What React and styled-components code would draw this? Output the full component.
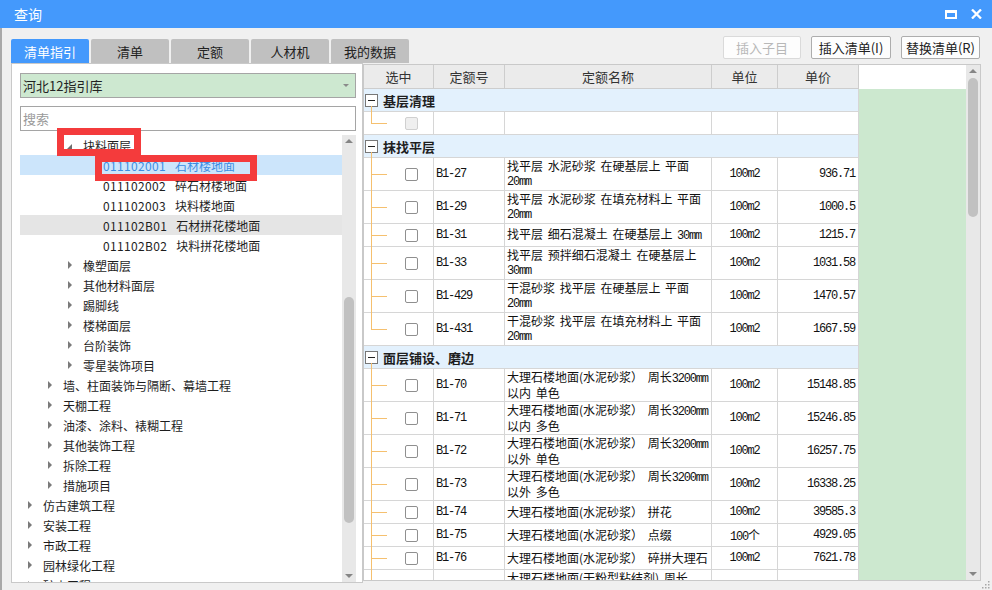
import React from 'react';
import styled, { createGlobalStyle } from 'styled-components';

const CJK = `"Noto Sans CJK SC", "Noto Sans", sans-serif`;
const MONO = `"Liberation Mono", "DejaVu Sans Mono", "Noto Sans CJK SC", monospace`;
const LINE = '#f5c06f';
const GRID = '70px 71px 207px 66px 81px 1fr';

const Global = createGlobalStyle`
  html, body { margin: 0; padding: 0; background: #f0f0f0; }
  body { font-family: ${CJK}; }
  #root { width: 992px; height: 590px; overflow: hidden; }
  * { box-sizing: border-box; }
`;

const Window = styled.div`
  position: relative;
  width: 992px;
  height: 590px;
  background: #f0f0f0;
  display: flex;
  flex-direction: column;
  overflow: hidden;
`;

const TitleBar = styled.div`
  height: 28px;
  flex-shrink: 0;
  background: #4499fc;
  color: #fff;
  font-size: 14px;
  display: flex;
  align-items: center;
  padding: 0 10px 0 14px;
`;

const WinControls = styled.div`
  margin-left: auto;
  display: flex;
  align-items: center;
  gap: 14px;
`;

const Body = styled.div`
  flex: 1;
  min-height: 0;
  display: flex;
  flex-direction: column;
  border-left: 2px solid #a9a9a9;
`;

const Toolbar = styled.div`
  height: 35px;
  flex-shrink: 0;
  display: flex;
  align-items: flex-end;
  padding: 0 12px 0 9px;
`;

const Tabs = styled.div`
  display: flex;
  gap: 2px;
`;

const Tab = styled.div`
  width: 78px;
  height: 24px;
  border-radius: 2px 2px 0 0;
  background: ${p => (p.active ? '#4499fc' : '#c0c0c0')};
  color: ${p => (p.active ? '#fff' : '#222')};
  font-size: 13px;
  display: flex;
  align-items: center;
  justify-content: center;
`;

const Actions = styled.div`
  margin-left: auto;
  margin-bottom: 4px;
  display: flex;
  gap: 10px;
`;

const ActionButton = styled.div`
  width: ${p => p.w}px;
  height: 23px;
  border: 1px solid ${p => (p.disabled ? '#dadada' : '#adadad')};
  border-radius: 2px;
  background: #fdfdfd;
  color: ${p => (p.disabled ? '#b8b8b8' : '#222')};
  font-size: 13px;
  display: flex;
  align-items: center;
  justify-content: center;
`;

const Main = styled.div`
  flex: 1;
  display: flex;
  align-items: flex-start;
  padding: 0 11px 0 9px;
`;

const LeftPanel = styled.div`
  width: 352px;
  height: 520px;
  flex-shrink: 0;
  background: #fff;
  border: 1px solid #c9c9c9;
  padding: 9px 6px 0 8px;
  display: flex;
  flex-direction: column;
`;

const SelectBox = styled.div`
  height: 25px;
  flex-shrink: 0;
  background: #cde8d0;
  border: 1px solid #a5a5a5;
  display: flex;
  align-items: center;
  padding: 0 6px 0 2px;
  font-size: 13px;
  color: #222;
`;

const SelectArrow = styled.span`
  margin-left: auto;
  width: 0;
  height: 0;
  border-left: 3px solid transparent;
  border-right: 3px solid transparent;
  border-top: 3px solid #8a8a8a;
`;

const SearchBox = styled.div`
  height: 25px;
  flex-shrink: 0;
  margin-top: 8px;
  border: 1px solid #a5a5a5;
  display: flex;
  align-items: center;
  padding-left: 2px;
  font-size: 13px;
  color: #9a9a9a;
`;

const TreeArea = styled.div`
  flex: 1;
  min-height: 0;
  margin-top: 4px;
  display: flex;
`;

const TreeList = styled.div`
  flex: 1;
  overflow: hidden;
`;

const TreeRow = styled.div`
  height: 20px;
  display: flex;
  align-items: center;
  padding-left: ${p => 8 + (p.level - 1) * 20}px;
  background: ${p => (p.selected ? '#cce5fb' : p.hover ? '#e5e5e5' : 'transparent')};
  color: ${p => (p.selected ? '#3d8de2' : '#1e1e1e')};
  font-size: 12px;
  white-space: nowrap;
`;

const TreeCode = styled.span`
  letter-spacing: 0.35px;
  margin-right: 9px;
`;

const Toggle = styled.span`
  width: 15px;
  height: 20px;
  flex-shrink: 0;
  display: flex;
  align-items: center;
`;

const Collapsed = styled.span`
  width: 0;
  height: 0;
  border-top: 4px solid transparent;
  border-bottom: 4px solid transparent;
  border-left: 4px solid #7a7a7a;
`;

const Expanded = styled.span`
  width: 0;
  height: 0;
  margin-left: -2px;
  margin-top: 3px;
  border-left: 6px solid transparent;
  border-bottom: 6px solid #6e6e6e;
`;

const ScrollBar = styled.div`
  width: 14px;
  flex-shrink: 0;
  background: #e8e8e8;
  display: flex;
  flex-direction: column;
  align-items: center;
`;

const ScrollArrow = styled.div`
  height: 12px;
  width: 100%;
  flex-shrink: 0;
  display: flex;
  align-items: center;
  justify-content: center;
`;

const ArrowUp = styled.span`
  width: 0;
  height: 0;
  border-left: 4px solid transparent;
  border-right: 4px solid transparent;
  border-bottom: 4px solid #858585;
`;

const ArrowDown = styled.span`
  width: 0;
  height: 0;
  border-left: 4px solid transparent;
  border-right: 4px solid transparent;
  border-top: 4px solid #858585;
`;

const ScrollTrack = styled.div`
  flex: 1;
  width: 100%;
  display: flex;
  flex-direction: column;
  align-items: center;
`;

const Thumb = styled.div`
  width: 10px;
  margin-top: ${p => p.top}px;
  height: ${p => p.h}px;
  border-radius: 5px;
  background: #c1c1c1;
`;

const RightPanel = styled.div`
  flex: 1;
  height: 517px;
  margin-top: 1px;
  border: 1px solid #c9c9c9;
  background: #f0f0f0;
  display: flex;
`;

const Table = styled.div`
  flex: 1;
  overflow: hidden;
  display: flex;
  flex-direction: column;
`;

const Row = styled.div`
  display: grid;
  grid-template-columns: ${GRID};
  height: ${p => p.h}px;
  flex-shrink: 0;
`;

const Cell = styled.div`
  position: relative;
  background: #fff;
  border-right: 1px solid #d6d6d6;
  border-bottom: 1px solid #d6d6d6;
  display: flex;
  align-items: center;
  justify-content: ${p => p.justify || 'flex-start'};
  padding: 0 ${p => p.pr || 0}px 0 ${p => p.pl || 0}px;
  font-family: ${p => (p.mono ? MONO : CJK)};
  font-size: 12px;
  letter-spacing: ${p => (p.mono ? '-1.2px' : '0')};
  color: #111;
  white-space: nowrap;
  min-width: 0;
`;

const HeadCell = styled.div`
  background: #ebebeb;
  border-right: 1px solid #cdcdcd;
  border-bottom: 1px solid #cdcdcd;
  display: flex;
  align-items: center;
  justify-content: center;
  font-size: 13px;
  color: #333;
`;

const Fill = styled.div`
  background: ${p => (p.head ? '#fff' : '#cce8cf')};
`;

const SelectCell = styled(Cell)`
  padding-left: 41px;
  &::before {
    content: '';
    position: absolute;
    left: 7px;
    top: 0;
    width: 1px;
    height: ${p => (p.last ? '50%' : 'calc(100% + 1px)')};
    background: ${LINE};
    z-index: 1;
  }
  &::after {
    content: '';
    position: absolute;
    left: 7px;
    top: 50%;
    width: 16px;
    height: 1px;
    background: ${LINE};
  }
`;

const GroupCell = styled.div`
  grid-column: 1 / 6;
  position: relative;
  background: #e3f1fd;
  border-right: 1px solid #d6d6d6;
  border-bottom: 1px solid #d6d6d6;
  display: flex;
  align-items: center;
  padding-left: 1px;
  font-size: 13px;
  font-weight: bold;
  color: #1e1e1e;
  &::after {
    content: '';
    position: absolute;
    left: 7px;
    top: calc(50% + 6px);
    bottom: -1px;
    width: 1px;
    background: ${LINE};
    z-index: 1;
  }
`;

const MinusBox = styled.span`
  width: 13px;
  height: 13px;
  border: 1px solid #777;
  background: #fff;
  display: flex;
  align-items: center;
  justify-content: center;
  margin-right: 5px;
  &::before {
    content: '';
    width: 7px;
    height: 1px;
    background: #222;
  }
`;

const CheckBox = styled.span`
  width: 13px;
  height: 13px;
  border: 1px solid ${p => (p.disabled ? '#d0d0d0' : '#8f8f8f')};
  background: ${p => (p.disabled ? '#efefef' : '#fff')};
  border-radius: 2px;
`;

const NameText = styled.div`
  line-height: 14px;
  word-spacing: 2px;
`;

const Ascii = styled.span`
  font-family: ${MONO};
  font-size: 12px;
  letter-spacing: -1.2px;
  word-spacing: 0;
`;

const RedBox = styled.div`
  position: absolute;
  left: ${p => p.x}px;
  top: ${p => p.y}px;
  width: ${p => p.w}px;
  height: ${p => p.h}px;
  border: 7px solid #f43b3c;
  pointer-events: none;
`;

const Grip = styled.svg`
  position: absolute;
  right: 2px;
  bottom: 1px;
`;

const tree = [
  { level: 3, text: '块料面层', expanded: true },
  { level: 4, code: '011102001', text: '石材楼地面', selected: true },
  { level: 4, code: '011102002', text: '碎石材楼地面' },
  { level: 4, code: '011102003', text: '块料楼地面' },
  { level: 4, code: '011102B01', text: '石材拼花楼地面', hover: true },
  { level: 4, code: '011102B02', text: '块料拼花楼地面' },
  { level: 3, text: '橡塑面层' },
  { level: 3, text: '其他材料面层' },
  { level: 3, text: '踢脚线' },
  { level: 3, text: '楼梯面层' },
  { level: 3, text: '台阶装饰' },
  { level: 3, text: '零星装饰项目' },
  { level: 2, text: '墙、柱面装饰与隔断、幕墙工程' },
  { level: 2, text: '天棚工程' },
  { level: 2, text: '油漆、涂料、裱糊工程' },
  { level: 2, text: '其他装饰工程' },
  { level: 2, text: '拆除工程' },
  { level: 2, text: '措施项目' },
  { level: 1, text: '仿古建筑工程' },
  { level: 1, text: '安装工程' },
  { level: 1, text: '市政工程' },
  { level: 1, text: '园林绿化工程' },
  { level: 1, text: '矿山工程' },
];

const groups = [
  { title: '基层清理', rows: [{ empty: true }] },
  {
    title: '抹找平层',
    rows: [
      { code: 'B1-27', name: ['找平层 水泥砂浆 在硬基层上 平面', '20mm'], unit: '100m2', price: '936.71' },
      { code: 'B1-29', name: ['找平层 水泥砂浆 在填充材料上 平面', '20mm'], unit: '100m2', price: '1000.5' },
      { code: 'B1-31', name: ['找平层 细石混凝土 在硬基层上 30mm'], unit: '100m2', price: '1215.7' },
      { code: 'B1-33', name: ['找平层 预拌细石混凝土 在硬基层上', '30mm'], unit: '100m2', price: '1031.58' },
      { code: 'B1-429', name: ['干混砂浆 找平层 在硬基层上 平面', '20mm'], unit: '100m2', price: '1470.57' },
      { code: 'B1-431', name: ['干混砂浆 找平层 在填充材料上 平面', '20mm'], unit: '100m2', price: '1667.59' },
    ],
  },
  {
    title: '面层铺设、磨边',
    open: true,
    rows: [
      { code: 'B1-70', name: ['大理石楼地面(水泥砂浆） 周长3200mm', '以内 单色'], unit: '100m2', price: '15148.85' },
      { code: 'B1-71', name: ['大理石楼地面(水泥砂浆） 周长3200mm', '以内 多色'], unit: '100m2', price: '15246.85' },
      { code: 'B1-72', name: ['大理石楼地面(水泥砂浆） 周长3200mm', '以外 单色'], unit: '100m2', price: '16257.75' },
      { code: 'B1-73', name: ['大理石楼地面(水泥砂浆） 周长3200mm', '以外 多色'], unit: '100m2', price: '16338.25' },
      { code: 'B1-74', name: ['大理石楼地面(水泥砂浆） 拼花'], unit: '100m2', price: '39585.3' },
      { code: 'B1-75', name: ['大理石楼地面(水泥砂浆） 点缀'], unit: '100个', price: '4929.05' },
      { code: 'B1-76', name: ['大理石楼地面(水泥砂浆） 碎拼大理石'], unit: '100m2', price: '7621.78' },
      { code: 'B1-77', name: ['大理石楼地面(干粉型粘结剂) 周长', '3200mm以内 单色'], unit: '100m2', price: '15360.12' },
    ],
  },
];

function MixedLine({ text }) {
  const parts = text.split(/([A-Za-z0-9.]+)/);
  return (
    <div>
      {parts.map((p, i) =>
        /^[A-Za-z0-9.]+$/.test(p) ? <Ascii key={i}>{p}</Ascii> : <React.Fragment key={i}>{p}</React.Fragment>
      )}
    </div>
  );
}

function MaxIcon() {
  return (
    <svg width="12" height="9" viewBox="0 0 12 9">
      <rect x="1" y="1.5" width="10" height="6.5" fill="none" stroke="#fff" strokeWidth="2" />
      <rect x="0" y="0" width="12" height="3" fill="#fff" />
    </svg>
  );
}

function CloseIcon() {
  return (
    <svg width="11" height="10" viewBox="0 0 11 10">
      <path d="M1 0.5 L10 9.5 M10 0.5 L1 9.5" stroke="#fff" strokeWidth="2.3" />
    </svg>
  );
}

function Scroll({ top, h }) {
  return (
    <ScrollBar>
      <ScrollArrow><ArrowUp /></ScrollArrow>
      <ScrollTrack><Thumb top={top} h={h} /></ScrollTrack>
      <ScrollArrow><ArrowDown /></ScrollArrow>
    </ScrollBar>
  );
}

function DataRow({ r, last }) {
  if (r.empty) {
    return (
      <Row h={23}>
        <SelectCell last={last}><CheckBox disabled /></SelectCell>
        <Cell /><Cell /><Cell /><Cell />
        <Fill />
      </Row>
    );
  }
  const h = r.name.length > 1 ? 33 : 23;
  return (
    <Row h={h}>
      <SelectCell last={last}><CheckBox /></SelectCell>
      <Cell mono pl={2}>{r.code}</Cell>
      <Cell pl={2}>
        <NameText>
          {r.name.map((l, i) => <MixedLine key={i} text={l} />)}
        </NameText>
      </Cell>
      <Cell mono justify="center">{r.unit}</Cell>
      <Cell mono justify="flex-end" pr={3}>{r.price}</Cell>
      <Fill />
    </Row>
  );
}

export default function App() {
  return (
    <>
      <Global />
      <Window>
        <TitleBar>
          <span>查询</span>
          <WinControls>
            <MaxIcon />
            <CloseIcon />
          </WinControls>
        </TitleBar>
        <Body>
          <Toolbar>
            <Tabs>
              <Tab active>清单指引</Tab>
              <Tab>清单</Tab>
              <Tab>定额</Tab>
              <Tab>人材机</Tab>
              <Tab>我的数据</Tab>
            </Tabs>
            <Actions>
              <ActionButton w={78} disabled>插入子目</ActionButton>
              <ActionButton w={80}>插入清单(I)</ActionButton>
              <ActionButton w={79}>替换清单(R)</ActionButton>
            </Actions>
          </Toolbar>
          <Main>
            <LeftPanel>
              <SelectBox>
                河北12指引库
                <SelectArrow />
              </SelectBox>
              <SearchBox>搜索</SearchBox>
              <TreeArea>
                <TreeList>
                  {tree.map((t, i) => (
                    <TreeRow key={i} level={t.level} selected={t.selected} hover={t.hover}>
                      <Toggle>
                        {t.code ? null : t.expanded ? <Expanded /> : <Collapsed />}
                      </Toggle>
                      {t.code ? <TreeCode>{t.code}</TreeCode> : null}
                      {t.text}
                    </TreeRow>
                  ))}
                </TreeList>
                <Scroll top={150} h={226} />
              </TreeArea>
            </LeftPanel>
            <RightPanel>
              <Table>
                <Row h={24}>
                  <HeadCell>选中</HeadCell>
                  <HeadCell>定额号</HeadCell>
                  <HeadCell>定额名称</HeadCell>
                  <HeadCell>单位</HeadCell>
                  <HeadCell>单价</HeadCell>
                  <Fill head />
                </Row>
                {groups.map((g, gi) => (
                  <React.Fragment key={gi}>
                    <Row h={23}>
                      <GroupCell>
                        <MinusBox />
                        {g.title}
                      </GroupCell>
                      <Fill />
                    </Row>
                    {g.rows.map((r, ri) => (
                      <DataRow key={ri} r={r} last={!g.open && ri === g.rows.length - 1} />
                    ))}
                  </React.Fragment>
                ))}
              </Table>
              <Scroll top={1} h={139} />
            </RightPanel>
          </Main>
        </Body>
        <RedBox x={57} y={128} w={84} h={28} />
        <RedBox x={95} y={155} w={162} h={26} />
        <Grip width="8" height="8" viewBox="0 0 8 8">
          <rect x="6" y="0" width="1.5" height="1.5" fill="#a8a8a8" />
          <rect x="3" y="3" width="1.5" height="1.5" fill="#a8a8a8" />
          <rect x="6" y="3" width="1.5" height="1.5" fill="#a8a8a8" />
          <rect x="0" y="6" width="1.5" height="1.5" fill="#a8a8a8" />
          <rect x="3" y="6" width="1.5" height="1.5" fill="#a8a8a8" />
          <rect x="6" y="6" width="1.5" height="1.5" fill="#a8a8a8" />
        </Grip>
      </Window>
    </>
  );
}
